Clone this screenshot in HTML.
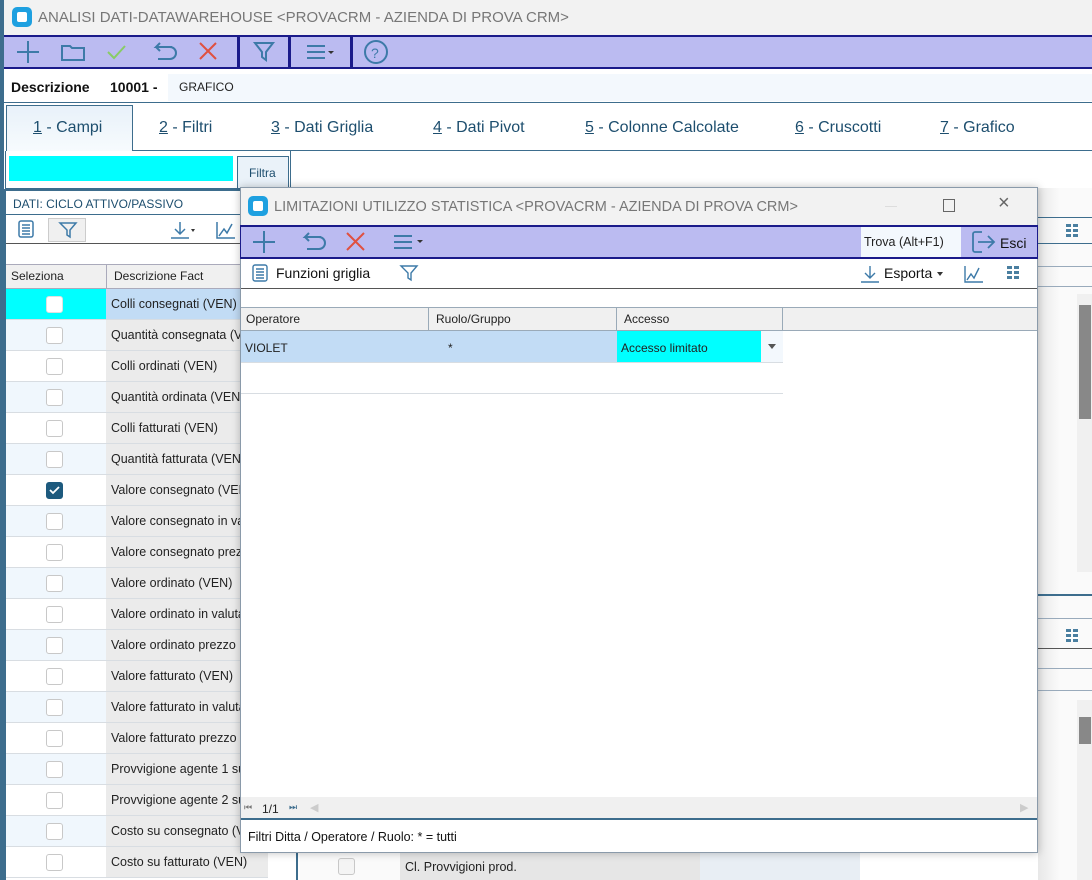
<!DOCTYPE html>
<html><head><meta charset="utf-8"><style>
*{box-sizing:border-box;margin:0;padding:0}
body{width:1092px;height:880px;overflow:hidden;background:#fff;font-family:"Liberation Sans",sans-serif;position:relative;font-size:12px;color:#222}
.a{position:absolute}
.lav{background:#bbbbf1}
.tab{position:absolute;top:119px;font-size:16px;color:#1d4e6e}
.tab u{text-decoration:underline}
.row{position:absolute;left:6px;width:262px;height:31px;border-bottom:1px solid #d8dde2}
.row .c{position:absolute;left:0;top:0;width:100px;height:30px}
.row .d{position:absolute;left:100px;top:0;width:162px;height:30px;background:#ebebeb;padding:8px 0 0 5px;font-size:12.5px;white-space:nowrap;overflow:hidden}
.cb{position:absolute;left:40px;top:7px;width:17px;height:17px;border:1.5px solid #c8c8c8;border-radius:3px;background:#fff}
.gr{position:absolute;width:13px;height:13px;background:
linear-gradient(#fff,#fff) 0 3px/13px 2px no-repeat,
linear-gradient(#fff,#fff) 0 8px/13px 2px no-repeat,
linear-gradient(90deg,#4a7fa0 0 5px,transparent 5px 7px,#4a7fa0 7px 12px,transparent 12px)}
</style></head><body>
<div class="a" style="left:0;top:0;width:4px;height:880px;background:#3d6d8d"></div>
<div class="a" style="left:4px;top:0;width:1088px;height:35px;background:#f2f2f2"></div>
<div class="a" style="left:12px;top:7px;width:20px;height:20px;background:#1ea0e0;border-radius:5px"><div style="position:absolute;left:5px;top:5px;width:10px;height:10px;background:#fff;border-radius:2px"></div></div>
<div class="a" style="left:38px;top:9px;font-size:15px;color:#777">ANALISI DATI-DATAWAREHOUSE &lt;PROVACRM - AZIENDA DI PROVA CRM&gt;</div>
<div class="a lav" style="left:4px;top:35px;width:1088px;height:34px;border-top:2px solid #1a1a8a;border-bottom:2px solid #1a1a8a"></div>
<svg class="a" style="left:4px;top:37px" width="400" height="30">
<g stroke-width="2" fill="none">
<path d="M13 15h22M24 4v22" stroke="#3d7aa8"/>
<path d="M58 9h8l2 2h12v12H58z" stroke="#3d7aa8"/>
<path d="M104 15l6 6 11-12" stroke="#88cc66"/>
<path d="M168 10h-16l4-4M152 10l4 4M152 10h14a6 6 0 010 12h-12" stroke="#3d7aa8"/>
<path d="M196 6l16 16M212 6L196 22" stroke="#e05040"/>
<path d="M251 6h18l-7 9v8l-4-3v-5z" stroke="#3d7aa8"/>
<path d="M303 9h18M303 15h18M303 21h18" stroke="#3d7aa8"/>
<path d="M372 15m-11 0a11 11 0 1022 0a11 11 0 10-22 0" stroke="#3d7aa8"/>
</g>
<path d="M324 14h6l-3 3z" fill="#333"/>
<text x="367" y="21" font-size="14" fill="#3d7aa8" font-family="Liberation Sans">?</text>
<rect x="233" y="0" width="3" height="30" fill="#1a1a8a"/><rect x="284" y="0" width="3" height="30" fill="#1a1a8a"/><rect x="346" y="0" width="3" height="30" fill="#1a1a8a"/>
</svg>
<div class="a" style="left:11px;top:79px;font-size:14px;font-weight:bold;color:#111">Descrizione</div>
<div class="a" style="left:110px;top:79px;font-size:14px;font-weight:bold;color:#111">10001 -</div>
<div class="a" style="left:168px;top:74px;width:924px;height:27px;background:#f3f8fd;padding:6px 0 0 11px;font-size:12px">GRAFICO</div>
<div class="a" style="left:4px;top:102px;width:1088px;height:1px;background:#3d6d8d"></div>
<div class="a" style="left:6px;top:105px;width:127px;height:46px;background:linear-gradient(#e8f1f9,#f7fbfe);border:1px solid #3d6d8d;border-bottom:none"></div>
<div class="a" style="left:133px;top:150px;width:959px;height:1px;background:#3d6d8d"></div>
<div class="tab" style="left:33px"><u>1</u> - Campi</div>
<div class="tab" style="left:159px"><u>2</u> - Filtri</div>
<div class="tab" style="left:271px"><u>3</u> - Dati Griglia</div>
<div class="tab" style="left:433px"><u>4</u> - Dati Pivot</div>
<div class="tab" style="left:585px"><u>5</u> - Colonne Calcolate</div>
<div class="tab" style="left:795px"><u>6</u> - Cruscotti</div>
<div class="tab" style="left:940px"><u>7</u> - Grafico</div>
<div class="a" style="left:5px;top:151px;width:286px;height:38px;border:1px solid #3d6d8d;border-top:none"></div>
<div class="a" style="left:9px;top:156px;width:224px;height:25px;background:#00ffff"></div>
<div class="a" style="left:237px;top:156px;width:52px;height:33px;background:#eaf2f9;border:1px solid #3d6d8d;padding:9px 0 0 11px;font-size:12px;color:#1d4e6e">Filtra</div>
<div class="a" style="left:4px;top:189px;width:290px;height:691px;border-left:2px solid #3d6d8d;border-top:2px solid #3d6d8d"></div>
<div class="a" style="left:13px;top:197px;font-size:12px;color:#1d4e6e">DATI: CICLO ATTIVO/PASSIVO</div>
<div class="a" style="left:6px;top:214px;width:288px;height:1px;background:#3d6d8d"></div>
<div class="a" style="left:48px;top:218px;width:38px;height:24px;background:#f0f0f0;border:1px solid #ccc"></div>
<svg class="a" style="left:6px;top:216px" width="240" height="28" fill="none" stroke="#3d7aa8" stroke-width="1.5">
<rect x="13" y="5" width="14" height="16" rx="2"/><path d="M16 9h8M16 12h8M16 15h8M16 18h8"/>
<path d="M54 7h16l-6 7v7l-3-2v-5z"/>
<path d="M174 6v12M169 13l5 5 5-5M165 22h18"/><path d="M185 13h4l-2 3z" fill="#333" stroke="none"/>
<path d="M211 6v16h18M213 20l5-7 3 4 5-9"/>
</svg>
<div class="a" style="left:6px;top:243px;width:288px;height:1px;background:#555"></div>
<div class="a" style="left:6px;top:264px;width:288px;height:25px;background:#f0f0f0;border-top:1px solid #aab;border-bottom:1px solid #aab"></div>
<div class="a" style="left:106px;top:264px;width:1px;height:25px;background:#aab"></div>
<div class="a" style="left:11px;top:269px;font-size:12px">Seleziona</div>
<div class="a" style="left:114px;top:269px;font-size:12px">Descrizione Fact</div>

<div class="row" style="top:289px"><div class="c" style="background:#00ffff"><div class="cb" style="border-color:#e0e0e0"></div></div><div class="d" style="background:#c2dcf5">Colli consegnati (VEN)</div></div>
<div class="row" style="top:320px"><div class="c" style="background:#f0f7fd"><div class="cb"></div></div><div class="d">Quantità consegnata (VEN)</div></div>
<div class="row" style="top:351px"><div class="c"><div class="cb"></div></div><div class="d">Colli ordinati (VEN)</div></div>
<div class="row" style="top:382px"><div class="c" style="background:#f0f7fd"><div class="cb"></div></div><div class="d">Quantità ordinata (VEN)</div></div>
<div class="row" style="top:413px"><div class="c"><div class="cb"></div></div><div class="d">Colli fatturati (VEN)</div></div>
<div class="row" style="top:444px"><div class="c" style="background:#f0f7fd"><div class="cb"></div></div><div class="d">Quantità fatturata (VEN)</div></div>
<div class="row" style="top:475px"><div class="c"><div class="cb" style="background:#1d5a7e;border-color:#1d5a7e"><svg width="14" height="14" style="position:absolute;left:0;top:0"><path d="M3 7l3 3 6-6" stroke="#fff" stroke-width="1.8" fill="none"/></svg></div></div><div class="d">Valore consegnato (VEN)</div></div>
<div class="row" style="top:506px"><div class="c" style="background:#f0f7fd"><div class="cb"></div></div><div class="d">Valore consegnato in valuta</div></div>
<div class="row" style="top:537px"><div class="c"><div class="cb"></div></div><div class="d">Valore consegnato prezzo</div></div>
<div class="row" style="top:568px"><div class="c" style="background:#f0f7fd"><div class="cb"></div></div><div class="d">Valore ordinato (VEN)</div></div>
<div class="row" style="top:599px"><div class="c"><div class="cb"></div></div><div class="d">Valore ordinato in valuta</div></div>
<div class="row" style="top:630px"><div class="c" style="background:#f0f7fd"><div class="cb"></div></div><div class="d">Valore ordinato prezzo</div></div>
<div class="row" style="top:661px"><div class="c"><div class="cb"></div></div><div class="d">Valore fatturato (VEN)</div></div>
<div class="row" style="top:692px"><div class="c" style="background:#f0f7fd"><div class="cb"></div></div><div class="d">Valore fatturato in valuta</div></div>
<div class="row" style="top:723px"><div class="c"><div class="cb"></div></div><div class="d">Valore fatturato prezzo</div></div>
<div class="row" style="top:754px"><div class="c" style="background:#f0f7fd"><div class="cb"></div></div><div class="d">Provvigione agente 1 su</div></div>
<div class="row" style="top:785px"><div class="c"><div class="cb"></div></div><div class="d">Provvigione agente 2 su</div></div>
<div class="row" style="top:816px"><div class="c" style="background:#f0f7fd"><div class="cb"></div></div><div class="d">Costo su consegnato (VEN)</div></div>
<div class="row" style="top:847px"><div class="c"><div class="cb"></div></div><div class="d">Costo su fatturato (VEN)</div></div>

<div class="a" style="left:296px;top:853px;width:2px;height:27px;background:#3d6d8d"></div>
<div class="a" style="left:300px;top:853px;width:100px;height:27px;background:#fafafa"></div>
<div class="a" style="left:338px;top:858px;width:17px;height:17px;border:1.5px solid #c8c8c8;border-radius:3px;background:#f4f4f4"></div>
<div class="a" style="left:400px;top:853px;width:300px;height:27px;background:#e6e6e6;padding:7px 0 0 5px;font-size:12.5px">Cl. Provvigioni prod.</div>
<div class="a" style="left:700px;top:853px;width:160px;height:27px;background:#e8eef4"></div>
<div class="a" style="left:1038px;top:188px;width:54px;height:692px;background:linear-gradient(90deg,#e8e8e8,#fafafa 40%)"></div>
<div class="a" style="left:1038px;top:217px;width:54px;height:1px;background:#3d6d8d"></div>
<div class="a" style="left:1038px;top:243px;width:54px;height:1px;background:#3d6d8d"></div>
<div class="a" style="left:1038px;top:266px;width:54px;height:1px;background:#9ab"></div>
<div class="a" style="left:1038px;top:286px;width:54px;height:1px;background:#9ab"></div>
<div class="a" style="left:1077px;top:294px;width:15px;height:278px;background:#f0f0f0"></div>
<div class="a" style="left:1079px;top:305px;width:12px;height:114px;background:#888"></div>
<div class="a" style="left:1038px;top:594px;width:54px;height:2px;background:#3d6d8d"></div>
<div class="a" style="left:1038px;top:618px;width:54px;height:1px;background:#9ab"></div>
<div class="a" style="left:1038px;top:648px;width:54px;height:1px;background:#555"></div>
<div class="a" style="left:1038px;top:668px;width:54px;height:1px;background:#9ab"></div>
<div class="a" style="left:1038px;top:690px;width:54px;height:1px;background:#9ab"></div>
<div class="a" style="left:1077px;top:700px;width:15px;height:180px;background:#f0f0f0"></div>
<div class="a" style="left:1079px;top:717px;width:12px;height:27px;background:#888"></div>
<div class="gr" style="left:1066px;top:224px"></div>
<div class="gr" style="left:1066px;top:629px"></div>

<div class="a" style="left:240px;top:187px;width:798px;height:666px;background:#fff;border:1px solid #8a9aaa;box-shadow:0 0 8px rgba(0,0,0,.25)"></div>
<div class="a" style="left:241px;top:188px;width:796px;height:37px;background:#f2f2f2"></div>
<div class="a" style="left:248px;top:196px;width:20px;height:20px;background:#1ea0e0;border-radius:5px"><div style="position:absolute;left:5px;top:5px;width:10px;height:10px;background:#fff;border-radius:2px"></div></div>
<div class="a" style="left:274px;top:199px;font-size:14.5px;color:#777">LIMITAZIONI UTILIZZO STATISTICA &lt;PROVACRM - AZIENDA DI PROVA CRM&gt;</div>
<div class="a" style="left:885px;top:206px;width:12px;height:1px;background:#ddd"></div>
<div class="a" style="left:943px;top:199px;width:12px;height:13px;border:1px solid #666"></div>
<div class="a" style="left:998px;top:192px;font-size:20px;color:#666">×</div>
<div class="a lav" style="left:240px;top:225px;width:798px;height:34px;border:2px solid #1a1a8a;border-left:1px solid #1a1a8a;border-right:1px solid #1a1a8a"></div>
<svg class="a" style="left:241px;top:227px" width="200" height="30" fill="none" stroke-width="2">
<path d="M12 15h22M23 4v22" stroke="#3d7aa8"/>
<path d="M80 10h-16l4-4M64 10l4 4M64 10h14a6 6 0 010 12h-12" stroke="#3d7aa8"/>
<path d="M106 6l17 17M123 6l-17 17" stroke="#e05040"/>
<path d="M153 9h18M153 15h18M153 21h18" stroke="#3d7aa8"/>
<path d="M176 13h6l-3 3z" fill="#333" stroke="none"/>
</svg>
<div class="a" style="left:861px;top:227px;width:100px;height:30px;background:#f3f8fd;padding:8px 0 0 3px;font-size:12.5px">Trova (Alt+F1)</div>
<svg class="a" style="left:970px;top:229px" width="30" height="26" fill="none" stroke="#3d7aa8" stroke-width="1.8"><path d="M12 3H5a2 2 0 00-2 2v16a2 2 0 002 2h7"/><path d="M8 13h16M18 7l6 6-6 6"/></svg>
<div class="a" style="left:1000px;top:235px;font-size:14px;color:#111">Esci</div>
<svg class="a" style="left:250px;top:262px" width="180" height="24" fill="none" stroke="#3d7aa8" stroke-width="1.4">
<rect x="3" y="3" width="14" height="16" rx="2"/><path d="M6 7h8M6 10h8M6 13h8M6 16h8"/>
<path d="M151 4h16l-6 7v7l-3-2v-5z"/>
</svg>
<div class="a" style="left:276px;top:265px;font-size:14px;color:#111">Funzioni griglia</div>
<svg class="a" style="left:858px;top:262px" width="170" height="24" fill="none" stroke="#3d7aa8" stroke-width="1.4">
<path d="M12 4v12M7 11l5 5 5-5M3 20h18"/>
<path d="M107 4v16h18M109 18l4-6 3 4 5-10"/>
</svg>
<div class="a" style="left:884px;top:265px;font-size:14px;color:#111">Esporta</div>
<div class="a" style="left:937px;top:272px;border:3px solid transparent;border-top:4px solid #333"></div>
<div class="gr" style="left:1007px;top:266px"></div>
<div class="a" style="left:241px;top:288px;width:796px;height:1px;background:#555"></div>
<div class="a" style="left:241px;top:307px;width:796px;height:24px;background:#f0f0f0;border-top:1px solid #9aaab8;border-bottom:1px solid #9aaab8"></div>
<div class="a" style="left:428px;top:307px;width:1px;height:24px;background:#9aaab8"></div>
<div class="a" style="left:616px;top:307px;width:1px;height:24px;background:#9aaab8"></div>
<div class="a" style="left:782px;top:307px;width:1px;height:24px;background:#9aaab8"></div>
<div class="a" style="left:246px;top:312px;font-size:12px">Operatore</div>
<div class="a" style="left:436px;top:312px;font-size:12px">Ruolo/Gruppo</div>
<div class="a" style="left:624px;top:312px;font-size:12px">Accesso</div>
<div class="a" style="left:241px;top:331px;width:376px;height:31px;background:#c2dcf5"></div>
<div class="a" style="left:617px;top:331px;width:144px;height:31px;background:#00ffff"></div>
<div class="a" style="left:761px;top:331px;width:22px;height:31px;background:#f3f8fd"></div>
<div class="a" style="left:768px;top:344px;border:4px solid transparent;border-top:5px solid #555"></div>
<div class="a" style="left:241px;top:362px;width:542px;height:1px;background:#d8dde2"></div>
<div class="a" style="left:241px;top:393px;width:542px;height:1px;background:#d8dde2"></div>
<div class="a" style="left:245px;top:341px;font-size:12px">VIOLET</div>
<div class="a" style="left:448px;top:341px;font-size:12px">*</div>
<div class="a" style="left:621px;top:341px;font-size:12px">Accesso limitato</div>
<div class="a" style="left:241px;top:797px;width:796px;height:23px;background:#f0f0f0;border-bottom:2px solid #3d6d8d"></div>
<div class="a" style="left:244px;top:802px;font-size:9px;color:#777">⏮</div>
<div class="a" style="left:262px;top:802px;font-size:12px">1/1</div>
<div class="a" style="left:289px;top:802px;font-size:9px;color:#3d6d8d">⏭</div>
<div class="a" style="left:310px;top:801px;font-size:11px;color:#ccc">◀</div>
<div class="a" style="left:1020px;top:801px;font-size:11px;color:#ccc">▶</div>
<div class="a" style="left:248px;top:830px;font-size:12.5px;color:#111">Filtri Ditta / Operatore / Ruolo: * = tutti</div>
</body></html>
